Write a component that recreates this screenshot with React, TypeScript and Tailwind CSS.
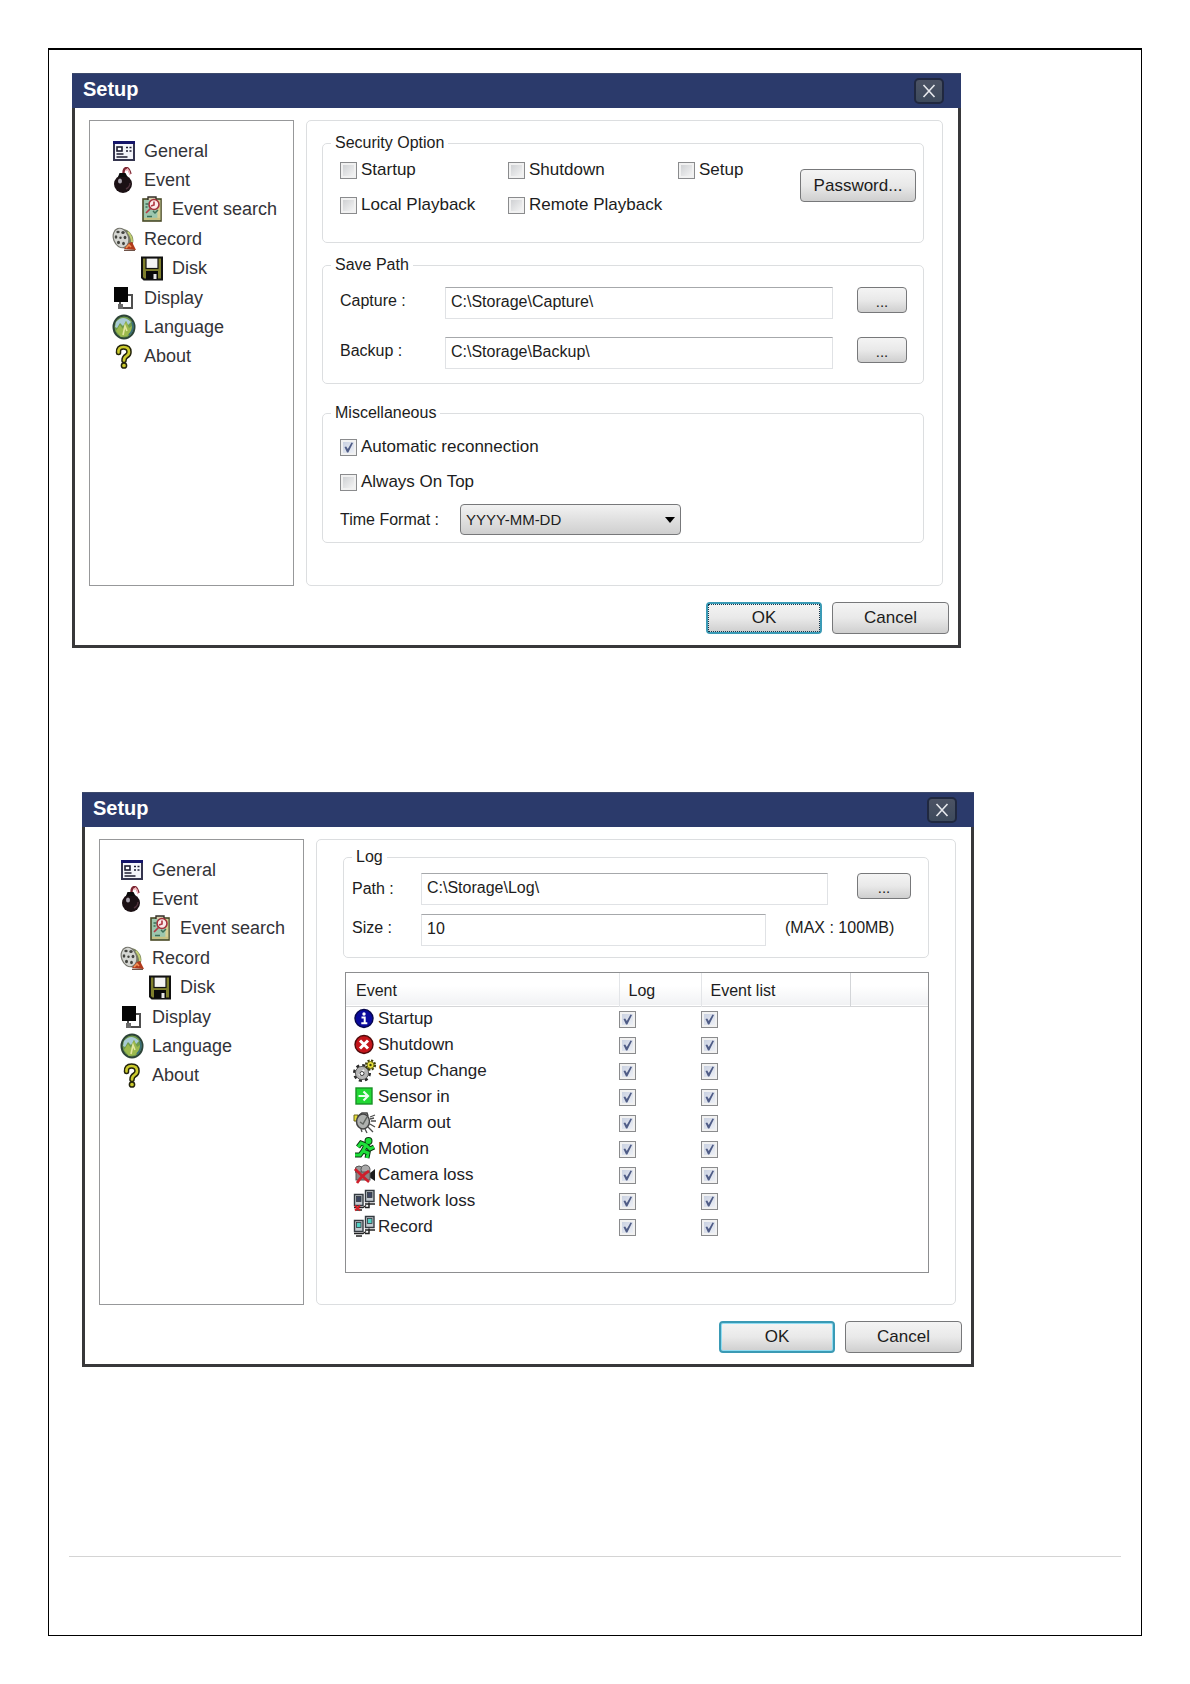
import { useId, useState } from "react"
import type { ReactNode } from "react"
import clsx from "clsx"

// ** Sidebar icons
const GeneralIcon = () => (
	<svg viewBox="0 0 24 26" className="h-[26px] w-6 shrink-0" aria-hidden="true">
		<rect x="2" y="4" width="20" height="18" fill="#f4f5fa" stroke="#34344e" strokeWidth="2" />
		<rect x="1" y="3" width="22" height="3" fill="#15156a" />
		<rect x="5" y="9" width="5" height="4" fill="#fff" stroke="#1c1c30" strokeWidth="1.600" />
		<path d="M14 9.500h2M17.500 9.500h2M14 13h2M17.500 13h2M4.500 16h7M4.500 19h11" stroke="#1c1c30" strokeWidth="1.400" />
	</svg>
)

const BombIcon = () => (
	<svg viewBox="0 0 24 26" className="h-[26px] w-6 shrink-0" aria-hidden="true">
		<circle cx="11" cy="17" r="9" fill="#1b1014" />
		<path d="M6 10l1.500-4h6l2 4z" fill="#0b0b0b" />
		<path d="M11.500 6c0-3 1-5 3-5s3 2 4 6" fill="none" stroke="#7c2632" strokeWidth="2.400" />
		<path d="M13.500 4l2-2 1.500 2 1 4" fill="none" stroke="#f3b5bb" strokeWidth="1.400" />
		<ellipse cx="8" cy="14" rx="2" ry="2.600" fill="#a9a3ad" />
		<path d="M14 22q4-2 4-6" fill="none" stroke="#50323c" strokeWidth="1.400" />
	</svg>
)

const SearchIcon = () => (
	<svg viewBox="0 0 24 26" className="h-[26px] w-6 shrink-0" aria-hidden="true">
		<rect x="3" y="3" width="18" height="22" fill="#9cc7ae" stroke="#4a4a26" strokeWidth="1.600" />
		<rect x="17.400" y="4" width="3" height="20" fill="#d7cf94" />
		<path d="M4 22.800h16" stroke="#c9c07f" strokeWidth="2" />
		<path d="M8 4V1h8v3" fill="#d8cfae" stroke="#35302a" strokeWidth="1.400" />
		<circle cx="14" cy="8.500" r="5" fill="#fbe9ea" stroke="#a5303b" strokeWidth="1.600" />
		<path d="M14 5.500v3.500l-3 1M10.500 12.500L6 17" fill="none" stroke="#b33b46" strokeWidth="1.700" />
		<path d="M13 15l2 2 3-3M5.500 8h3M5.500 11h2M7 20.500h5" fill="none" stroke="#3c6f58" strokeWidth="1.500" />
	</svg>
)

const ReelIcon = () => (
	<svg viewBox="0 0 24 26" className="h-[26px] w-6 shrink-0" aria-hidden="true">
		<ellipse cx="13" cy="13" rx="8" ry="10" transform="rotate(-24 13 13)" fill="#77805a" />
		<ellipse cx="9" cy="12" rx="7.500" ry="10" transform="rotate(-20 9 12)" fill="#d5d6d2" stroke="#77776f" strokeWidth="1.200" />
		<g fill="#43443f">
			<ellipse cx="6" cy="6" rx="1.700" ry="1.300" />
			<ellipse cx="11" cy="6.500" rx="1.700" ry="1.500" />
			<ellipse cx="4" cy="11" rx="1.300" ry="1.700" />
			<ellipse cx="13" cy="11.500" rx="1.400" ry="1.800" />
			<ellipse cx="6.500" cy="16.500" rx="1.500" ry="1.700" />
			<ellipse cx="11.500" cy="17.500" rx="1.400" ry="1.700" />
			<circle cx="8.500" cy="11.800" r="1.200" />
		</g>
		<path d="M16 6q4 5 4 10" fill="none" stroke="#c2cf73" strokeWidth="2" />
		<path d="M12 23l5-6 3-1 4 8z" fill="#b23a1b" />
		<path d="M14 22l3-3 2 2" fill="none" stroke="#f19356" strokeWidth="1.600" />
		<path d="M12 24.300h11" stroke="#5f4034" strokeWidth="1.200" />
	</svg>
)

const DiskIcon = () => (
	<svg viewBox="0 0 24 26" className="h-[26px] w-6 shrink-0" aria-hidden="true">
		<path d="M2 2.500h20v22H4l-2-2z" fill="#7f7f2c" stroke="#111" strokeWidth="2" />
		<rect x="6" y="3" width="12" height="10.500" fill="#f4f4f4" stroke="#111" strokeWidth="1.200" />
		<rect x="6" y="16" width="12" height="8" fill="#0a0a0a" />
		<rect x="13.500" y="19" width="3" height="5" fill="#e8e8e8" />
	</svg>
)

const DisplayIcon = () => (
	<svg viewBox="0 0 24 26" className="h-[26px] w-6 shrink-0" aria-hidden="true">
		<rect x="8" y="10" width="12" height="13" fill="#fff" stroke="#4f4f4f" strokeWidth="2" />
		<rect x="6" y="19" width="5" height="5" fill="#6b6b6b" />
		<rect x="2" y="2" width="14" height="15" fill="#050505" />
	</svg>
)

const GlobeIcon = () => (
	<svg viewBox="0 0 24 26" className="h-[26px] w-6 shrink-0" aria-hidden="true">
		<ellipse cx="12" cy="13" rx="10.500" ry="11.500" fill="#6f9b4c" stroke="#2d4438" strokeWidth="2" />
		<path d="M4 8q7-8 15 0l-3 3-2-4-3 5-3-3-3 5-2-1z" fill="#a9cbd5" />
		<path d="M4 17l4-6 3 4 3-8 3 7 3-2-1 6-4 4-6 1z" fill="#9cb94d" />
		<path d="M11 21l2-9 2 5" fill="none" stroke="#e3e6a0" strokeWidth="1.600" />
		<path d="M20 8q3 7-3 13" fill="none" stroke="#3b6f77" strokeWidth="1.800" />
	</svg>
)

const AboutIcon = () => (
	<svg viewBox="0 0 24 26" className="h-[26px] w-6 shrink-0" aria-hidden="true">
		<g fill="none" strokeLinecap="round">
			<path d="M6.500 9.500Q6 4 11.500 4T17 9q0 2.500-2.500 4T12 17.500" stroke="#24240c" strokeWidth="5.600" />
			<path d="M6.500 9.500Q6 4 11.500 4T17 9q0 2.500-2.500 4T12 17.500" stroke="#cccb2d" strokeWidth="2.600" />
		</g>
		<circle cx="12" cy="22.500" r="2.600" fill="#cccb2d" stroke="#24240c" strokeWidth="1.500" />
	</svg>
)

// ** Event icons
const InfoIcon = () => (
	<svg viewBox="0 0 24 24" className="size-6 shrink-0" aria-hidden="true">
		<circle cx="11" cy="11.500" r="9" fill="#0a0a9c" stroke="#06064c" strokeWidth="1.400" />
		<circle cx="11" cy="7" r="1.700" fill="#fff" />
		<path d="M8.500 10.500h3.200v5.500M8.300 16.300h6" fill="none" stroke="#fff" strokeWidth="2" />
	</svg>
)

const StopIcon = () => (
	<svg viewBox="0 0 24 24" className="size-6 shrink-0" aria-hidden="true">
		<circle cx="11" cy="11.500" r="9" fill="#c4151b" stroke="#4d0a0a" strokeWidth="1.400" />
		<path d="M7 7.500l8 8M15 7.500l-8 8" stroke="#fff" strokeWidth="3" />
	</svg>
)

const GearIcon = () => (
	<svg viewBox="0 0 24 24" className="size-6 shrink-0" aria-hidden="true">
		<circle cx="9" cy="14" r="7.500" fill="none" stroke="#2b2b2b" strokeWidth="3" strokeDasharray="3 2.890" />
		<circle cx="9" cy="14" r="6.600" fill="#b5b5b5" stroke="#5a5a5a" />
		<path d="M6 16l5-5" stroke="#f2f2f2" strokeWidth="2" />
		<circle cx="9" cy="14.500" r="2" fill="#fff" stroke="#3a3a3a" />
		<circle cx="17.500" cy="6" r="4.300" fill="none" stroke="#3d3d0c" strokeWidth="2.600" strokeDasharray="2 1.380" />
		<circle cx="17.500" cy="6" r="3.500" fill="#e6e03a" stroke="#6b6714" />
		<circle cx="17.500" cy="6" r="1.200" fill="#3d3d0c" />
	</svg>
)

const SensorIcon = () => (
	<svg viewBox="0 0 24 24" className="size-6 shrink-0" aria-hidden="true">
		<rect x="3" y="3" width="16" height="16" fill="#22d834" stroke="#179225" strokeWidth="1.400" />
		<path d="M5.500 11h9M10.500 6.500L15 11l-4.500 4.500" fill="none" stroke="#eafff0" strokeWidth="2.200" />
	</svg>
)

const AlarmIcon = () => (
	<svg viewBox="0 0 24 24" className="size-6 shrink-0" aria-hidden="true">
		<path d="M1 4h4v6H1z" fill="#e8df3c" stroke="#6a651a" />
		<path d="M5 5l4-3h5l1 3" fill="none" stroke="#444" strokeWidth="1.500" />
		<ellipse cx="10" cy="10.500" rx="6.500" ry="7.500" fill="#aeb0ae" stroke="#444" strokeWidth="1.500" />
		<path d="M7 11l3 2 4-7" fill="none" stroke="#606460" strokeWidth="1.500" />
		<path d="M17 6l5-2M18 10h5M17 13l5 3M15 16l5 5M12 18l2 4M8 18l1 3M17 8l4-1" stroke="#4c4c4c" strokeWidth="1.300" />
	</svg>
)

const MotionIcon = () => (
	<svg viewBox="0 0 24 24" className="size-6 shrink-0" aria-hidden="true">
		{["#0b360f", "#1ee03a"].map((color, i) => (
			<g key={color} fill="none" stroke={color} strokeWidth={i === 0 ? 5 : 3}>
				<circle cx="15.500" cy="4" r="1.500" />
				<path d="M5 10l3-4 5 2 4 4 4-2M13 8l-3 6 5 2-1 5M10 14l-3 4H2" />
			</g>
		))}
	</svg>
)

const CameraIcon = () => (
	<svg viewBox="0 0 24 24" className="size-6 shrink-0" aria-hidden="true">
		<path d="M16 11l6-5v12l-6-4z" fill="#1c1c1c" />
		<circle cx="6" cy="7" r="4" fill="#9b9b9b" stroke="#555" />
		<circle cx="12.500" cy="6.500" r="4.500" fill="#aaa" stroke="#555" />
		<rect x="3" y="9" width="14" height="8" fill="#8c8484" stroke="#555" />
		<path d="M2 6q7 7 14 13M16 8Q9 12 4 20" fill="none" stroke="#cd1f2b" strokeWidth="2.600" />
	</svg>
)

const ComputersIcon = ({ screen, lost }: { screen: string; lost?: boolean }) => (
	<svg viewBox="0 0 24 24" className="size-6 shrink-0" aria-hidden="true">
		<path d="M12.500 1.500h8.500v11h-8.500z" fill="#c4cbd0" stroke="#343a40" strokeWidth="1.400" />
		<rect x="14.500" y="3.500" width="4.500" height="5" fill={screen} stroke="#343a40" strokeWidth=".8" />
		<path d="M12 15h10M12 18.500h4v-5" fill="none" stroke="#222" strokeWidth="1.500" />
		<path d="M1.500 5.500h8.500v11H1.500z" fill="#c4cbd0" stroke="#343a40" strokeWidth="1.400" />
		<rect x="3.500" y="7.500" width="4.500" height="5" fill={screen} stroke="#343a40" strokeWidth=".8" />
		<path d="M1 18.500h9l3-2M3 21h6" fill="none" stroke="#222" strokeWidth="1.400" />
		{lost && <path d="M2 16.500l5 5M7 16.500l-5 5" stroke="#d81f26" strokeWidth="1.800" />}
	</svg>
)

const menu = [
	{ label: "General", icon: <GeneralIcon /> },
	{ label: "Event", icon: <BombIcon /> },
	{ label: "Event search", icon: <SearchIcon />, nested: true },
	{ label: "Record", icon: <ReelIcon /> },
	{ label: "Disk", icon: <DiskIcon />, nested: true },
	{ label: "Display", icon: <DisplayIcon /> },
	{ label: "Language", icon: <GlobeIcon /> },
	{ label: "About", icon: <AboutIcon /> },
]

const events = [
	{ label: "Startup", icon: <InfoIcon /> },
	{ label: "Shutdown", icon: <StopIcon /> },
	{ label: "Setup Change", icon: <GearIcon /> },
	{ label: "Sensor in", icon: <SensorIcon /> },
	{ label: "Alarm out", icon: <AlarmIcon /> },
	{ label: "Motion", icon: <MotionIcon /> },
	{ label: "Camera loss", icon: <CameraIcon /> },
	{ label: "Network loss", icon: <ComputersIcon screen="#3c4560" lost /> },
	{ label: "Record", icon: <ComputersIcon screen="#4fd0c4" /> },
]

// ** Controls
const CheckBox = ({ checked = false, label, id }: { checked?: boolean; label?: string; id?: string }) => {
	const [on, setOn] = useState(checked)

	return (
		<span className="relative block size-[17px] shrink-0">
			<input
				id={id}
				type="checkbox"
				aria-label={label}
				checked={on}
				onChange={() => setOn(!on)}
				className="block size-[17px] appearance-none border border-[#8a8b8d] bg-linear-to-br from-[#c9cbce] to-[#fafafa] shadow-[inset_0_0_0_2px_#f1f1f1] checked:from-[#c3cbdd] checked:to-[#f4f6fa]"
			/>
			{on && (
				<svg viewBox="0 0 17 17" className="pointer-events-none absolute inset-0" aria-hidden="true">
					<path d="M4.500 8l1.700-.6 1.600 2.600 3.700-6.500 1.500.5L8.300 13.500H7z" fill="#4f5c86" />
				</svg>
			)}
		</span>
	)
}

const CheckField = ({ label, checked }: { label: string; checked?: boolean }) => {
	const id = useId()

	return (
		<div className="flex h-5 items-center gap-1">
			<CheckBox id={id} checked={checked} />
			<label htmlFor={id} className="text-[17px] leading-5 whitespace-nowrap">
				{label}
			</label>
		</div>
	)
}

const PushButton = ({ children, className }: { children: ReactNode; className: string }) => (
	<button
		type="button"
		className={clsx(
			"shrink-0 rounded-[4px] bg-linear-to-b from-[#f4f4f4] from-0% via-[#e9e9e9] via-50% to-[#cfcfcf] leading-5",
			className
		)}>
		{children}
	</button>
)

const BrowseButton = ({ className }: { className: string }) => (
	<PushButton className={clsx("h-[26px] border border-[#77787a] pt-1 text-[15px]", className)}>...</PushButton>
)

const Group = ({ title, className, children }: { title: string; className?: string; children: ReactNode }) => (
	<fieldset className={clsx("min-w-0 rounded-[5px] border border-[#dcdee0]", className)}>
		<legend className="ml-2 px-1 text-base leading-5">{title}</legend>
		{children}
	</fieldset>
)

const fieldClass =
	"h-8 min-w-0 border border-[#e0e2e5] border-t-[#a6a8ab] bg-white px-[5px] pb-[2px] text-base leading-5 outline-none"

const PathField = ({ label, value }: { label: string; value: string }) => {
	const id = useId()

	return (
		<div className="flex items-start">
			<label htmlFor={id} className="w-[105px] shrink-0 text-base leading-7">
				{label}
			</label>
			<input id={id} defaultValue={value} className={clsx(fieldClass, "flex-1")} />
			<BrowseButton className="ml-6 w-[50px]" />
		</div>
	)
}

const SetupDialog = ({
	className,
	menuClass,
	focused,
	children,
}: {
	className: string
	menuClass: string
	focused?: boolean
	children: ReactNode
}) => (
	<section className={className}>
		<header className="flex h-[35px] items-center justify-between border-t border-[#3d4a6c] bg-[#2b3a6b] pr-[17px] pl-[11px]">
			<h2 className="pb-1 text-xl leading-6 font-bold text-white">Setup</h2>
			<button
				type="button"
				aria-label="Close"
				className="flex h-[26px] w-[30px] items-center justify-center rounded-[5px] border-2 border-[#20283f] bg-linear-to-b from-[#4c5364] to-[#3d4a5c]">
				<svg viewBox="0 0 14 14" className="size-[14px]" aria-hidden="true">
					<path d="M1.500 1l11 12M12.500 1l-11 12" stroke="#e6e8ec" strokeWidth="1.600" />
				</svg>
			</button>
		</header>

		<div className="border-x-[3px] border-b-[3px] border-[#38383a] pb-[11px]">
			<div className="flex gap-3 pt-3 pr-[15px] pl-[14px]">
				<nav className={clsx("h-[466px] w-[205px] shrink-0 border border-[#97989a] pt-[15px]", menuClass)}>
					<ul className="grid h-[235px] grid-rows-8">
						{menu.map(({ label, icon, nested }) => (
							<li key={label} className={clsx("flex items-center", nested && "pl-7")}>
								<a href="#" className="flex items-center gap-2 text-lg leading-6 text-[#333338]">
									{icon}
									{label}
								</a>
							</li>
						))}
					</ul>
				</nav>
				{children}
			</div>

			<div className="mt-4 flex justify-end gap-[10px] pr-[9px] text-[17px]">
				<PushButton
					className={clsx(
						"h-8 w-[116px] border-2 border-[#3a9ab5]",
						!focused && "shadow-[inset_0_0_0_1px_#8fdcf2]"
					)}>
					{focused ? (
						<span className="flex h-full items-center justify-center border border-dotted border-[#17364a]">
							OK
						</span>
					) : (
						"OK"
					)}
				</PushButton>
				<PushButton className="h-8 w-[117px] border border-[#77787a]">Cancel</PushButton>
			</div>
		</div>
	</section>
)

const GeneralPage = () => {
	const id = useId()

	return (
		<div className="flex-1 rounded-[5px] border border-[#dcdee0] py-3 pr-[18px] pl-[15px]">
			<Group title="Security Option" className="h-[110px]">
				<div className="flex items-start justify-between pr-[7px] pl-[17px]">
					<div className="grid grid-cols-[168px_170px_auto] gap-y-[15px] pt-[7px]">
						<CheckField label="Startup" />
						<CheckField label="Shutdown" />
						<CheckField label="Setup" />
						<CheckField label="Local Playback" />
						<CheckField label="Remote Playback" />
					</div>
					<PushButton className="mt-4 h-[33px] w-[116px] border border-[#77787a] text-[17px]">
						Password...
					</PushButton>
				</div>
			</Group>

			<Group title="Save Path" className="mt-3 h-[129px]">
				<div className="flex flex-col gap-[18px] pt-3 pr-4 pl-[17px]">
					<PathField label="Capture :" value="C:\Storage\Capture\" />
					<PathField label="Backup :" value="C:\Storage\Backup\" />
				</div>
			</Group>

			<Group title="Miscellaneous" className="mt-[19px] h-[140px]">
				<div className="flex flex-col gap-[15px] pt-[14px] pl-[17px]">
					<CheckField label="Automatic reconnection" checked />
					<CheckField label="Always On Top" />
				</div>
				<div className="mt-3 flex items-center pl-[17px]">
					<label htmlFor={id} className="w-[120px] text-base leading-5">
						Time Format :
					</label>
					<span className="relative block w-[221px]">
						<select
							id={id}
							className="block h-[31px] w-full appearance-none rounded-[4px] border border-[#77787a] bg-linear-to-b from-[#f2f2f2] to-[#cfcfcf] px-[5px] text-[15px] leading-5">
							<option>YYYY-MM-DD</option>
							<option>MM-DD-YYYY</option>
							<option>DD-MM-YYYY</option>
						</select>
						<svg
							viewBox="0 0 10 6"
							className="pointer-events-none absolute top-[13px] right-[6px] h-[6px] w-[10px]"
							aria-hidden="true">
							<path d="M0 0h10L5 6z" fill="#000" />
						</svg>
					</span>
				</div>
			</Group>
		</div>
	)
}

const LogPage = () => {
	const id = useId()

	return (
		<div className="flex-1 rounded-[5px] border border-[#dcdee0] pt-[7px] pr-[26px] pl-[26px]">
			<Group title="Log" className="h-[111px]">
				<div className="flex flex-col gap-[9px] pt-[6px] pr-[17px] pl-2">
					<div className="flex items-start">
						<label htmlFor={id + "path"} className="w-[69px] shrink-0 text-base leading-8">
							Path :
						</label>
						<input id={id + "path"} defaultValue="C:\Storage\Log\" className={clsx(fieldClass, "flex-1")} />
						<BrowseButton className="ml-[29px] w-[54px]" />
					</div>
					<div className="flex items-start">
						<label htmlFor={id + "size"} className="w-[69px] shrink-0 text-base leading-7">
							Size :
						</label>
						<input id={id + "size"} defaultValue="10" className={clsx(fieldClass, "w-[345px]")} />
						<span className="ml-[19px] text-base leading-7 whitespace-nowrap">(MAX : 100MB)</span>
					</div>
				</div>
			</Group>

			<div className="mt-[14px] ml-[2px] h-[301px] border border-[#8d8e90]">
				<table className="w-full table-fixed border-collapse text-left">
					<colgroup>
						<col className="w-[273px]" />
						<col className="w-[82px]" />
						<col className="w-[149px]" />
						<col />
					</colgroup>
					<thead>
						<tr className="h-[33px] border-b border-[#d5d6d8] bg-linear-to-b from-white from-40% to-[#f1f2f4] text-base leading-5">
							<th className="border-r border-[#e3e5e8] pt-1 pl-[10px] font-normal">Event</th>
							<th className="border-r border-[#e3e5e8] pt-1 pl-[9px] font-normal">Log</th>
							<th className="border-r border-[#d3d5d8] pt-1 pl-[9px] font-normal">Event list</th>
							<th></th>
						</tr>
					</thead>
					<tbody>
						{events.map(({ label, icon }) => (
							<tr key={label} className="h-[26px]">
								<td className="pl-[7px]">
									<span className="flex items-center gap-px text-[17px] leading-5 text-[#222226]">
										{icon}
										{label}
									</span>
								</td>
								<td>
									<CheckBox checked label={label + " log"} />
								</td>
								<td>
									<CheckBox checked label={label + " event list"} />
								</td>
								<td></td>
							</tr>
						))}
					</tbody>
				</table>
			</div>
		</div>
	)
}

const App = () => {
	return (
		<main className="bg-white p-12 font-['Liberation_Sans',Arial,sans-serif] text-[#1c1c20]">
			<div className="border border-t-2 border-black px-5 pt-[23px] pb-[78px]">
				<SetupDialog className="ml-[3px] max-w-[889px]" menuClass="pl-[22px]" focused>
					<GeneralPage />
				</SetupDialog>

				<SetupDialog className="mt-36 ml-[13px] max-w-[892px]" menuClass="pl-5">
					<LogPage />
				</SetupDialog>

				<hr className="mt-[189px] border-[#d4d4d4]" />
			</div>
		</main>
	)
}

export default App
